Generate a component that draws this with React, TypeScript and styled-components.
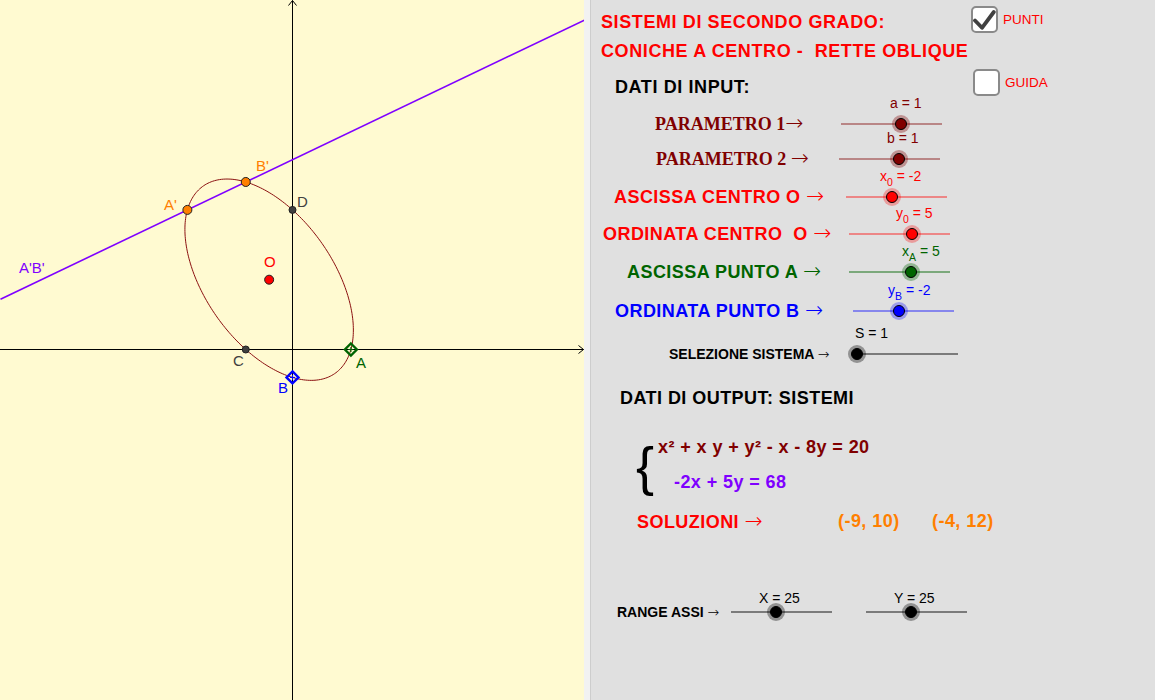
import React from "react";
import styled, { createGlobalStyle } from "styled-components";

const RED = "#ff0000";
const DARKRED = "#800000";
const GREEN = "#006400";
const BLUE = "#0000ff";
const PURPLE = "#7f00ff";
const ORANGE = "#ff7f00";
const PANEL_X = 591;

const GlobalStyle = createGlobalStyle`
  html, body {
    margin: 0;
    padding: 0;
    overflow: hidden;
  }
  body {
    font-family: "Liberation Sans", Arial, sans-serif;
  }
`;

const Page = styled.div`
  display: flex;
  width: 1155px;
  height: 700px;
  background: #e0e0e0;
`;

const Graphics = styled.div`
  width: 584px;
  height: 700px;
  flex-shrink: 0;
  background: #fffad1;
  svg {
    display: block;
  }
`;

const Divider = styled.div`
  width: 6px;
  flex-shrink: 0;
  background: #f2f2f2;
  border-right: 1px solid #cdcdcd;
`;

const Panel = styled.div`
  flex: 1;
  display: flex;
  flex-direction: column;
`;

const HeaderRow = styled.div<{ $h: number; $mt?: number }>`
  display: flex;
  align-items: center;
  height: ${(p) => p.$h}px;
  margin-top: ${(p) => p.$mt ?? 0}px;
  padding-left: 10px;
`;

const TitleCell = styled.div<{ $indent?: number }>`
  width: ${(p) => 370 - (p.$indent ?? 0)}px;
  padding-left: ${(p) => p.$indent ?? 0}px;
  flex-shrink: 0;
`;

const Title = styled.span<{ $color: string }>`
  font-weight: bold;
  font-size: 18px;
  letter-spacing: 0.6px;
  line-height: 22px;
  color: ${(p) => p.$color};
  white-space: pre;
`;

const CheckItem = styled.label<{ $top: number; $shift?: number }>`
  display: flex;
  align-items: center;
  align-self: flex-start;
  margin-top: ${(p) => p.$top}px;
  margin-left: ${(p) => p.$shift ?? 0}px;
  gap: 5px;
`;

const Box = styled.span`
  width: 23px;
  height: 23px;
  border: 2px solid #8a8a8a;
  border-radius: 5px;
  background: #ffffff;
  display: flex;
  align-items: center;
  justify-content: center;
`;

const CheckText = styled.span`
  font-size: 13.5px;
  color: ${RED};
`;

const Checkbox = ({ checked, label, top, shift }: { checked: boolean; label: string; top: number; shift?: number }) => (
  <CheckItem $top={top} $shift={shift}>
    <Box>
      {checked && (
        <svg width="23" height="23" viewBox="0 0 23 23">
          <polyline
            points="2,12.5 9,19.8 20.8,4"
            fill="none"
            stroke="#404040"
            strokeWidth="3.8"
            strokeLinecap="round"
            strokeLinejoin="round"
          />
        </svg>
      )}
    </Box>
    <CheckText>{label}</CheckText>
  </CheckItem>
);

const SliderRow = styled.div<{ $labelX: number; $trackX: number; $mt: number }>`
  display: grid;
  grid-template-columns: ${(p) => p.$trackX - p.$labelX}px auto;
  align-items: center;
  height: 20px;
  margin-top: ${(p) => p.$mt}px;
  padding-left: ${(p) => p.$labelX - PANEL_X}px;
`;

const RowLabel = styled.span<{ $color: string; $serif?: boolean; $size?: number }>`
  font-family: ${(p) =>
    p.$serif ? '"Liberation Serif", "Times New Roman", serif' : '"Liberation Sans", Arial, sans-serif'};
  font-weight: bold;
  font-size: ${(p) => p.$size ?? 18}px;
  letter-spacing: ${(p) => (p.$serif || (p.$size ?? 18) < 16 ? 0 : 0.45)}px;
  line-height: 20px;
  color: ${(p) => p.$color};
  white-space: pre;
`;

const Arrow = styled.span<{ $scale?: number }>`
  font-family: "DejaVu Sans", sans-serif;
  font-weight: 200;
  font-size: ${(p) => p.$scale ?? 1.2}em;
  letter-spacing: 0;
  line-height: 0;
`;

const Track = styled.div<{ $color: string; $w?: number }>`
  position: relative;
  width: ${(p) => p.$w ?? 101}px;
  height: 2px;
  background: ${(p) => p.$color};
`;

const Thumb = styled.span<{ $fill: string; $halo: string }>`
  position: absolute;
  top: 1px;
  width: 12px;
  height: 12px;
  margin: -6px 0 0 -6px;
  box-sizing: border-box;
  border-radius: 50%;
  background: ${(p) => p.$fill};
  border: 1px solid #000;
  box-shadow: 0 0 0 3px ${(p) => p.$halo};
`;

const ValueLabel = styled.span<{ $color: string; $rise: number; $dx: number }>`
  position: absolute;
  left: ${(p) => p.$dx}px;
  top: ${(p) => 1 - p.$rise - 8}px;
  font-size: 14px;
  line-height: 16px;
  color: ${(p) => p.$color};
  white-space: pre;
  sub {
    font-size: 10.5px;
    vertical-align: baseline;
    position: relative;
    top: 5px;
  }
`;

type SliderProps = {
  color: string;
  track: string;
  halo: string;
  frac: number;
  dx: number;
  rise: number;
  children: React.ReactNode;
};

const Slider = ({ color, track, halo, frac, dx, rise, children }: SliderProps) => (
  <Track $color={track}>
    <ValueLabel $color={color} $rise={rise} $dx={dx}>
      {children}
    </ValueLabel>
    <Thumb $fill={color} $halo={halo} style={{ left: `${frac * 100}%` }} />
  </Track>
);

const SectionHeading = styled.div<{ $mt: number; $x: number }>`
  height: 20px;
  line-height: 20px;
  margin-top: ${(p) => p.$mt}px;
  padding-left: ${(p) => p.$x - PANEL_X}px;
  font-weight: bold;
  font-size: 18px;
  letter-spacing: 0.45px;
  color: #000;
`;

const SystemBlock = styled.div`
  display: flex;
  margin-top: 27px;
  padding-left: 45px;
`;

const Brace = styled.span`
  font-size: 54px;
  line-height: 54px;
  height: 54px;
  margin-top: 4px;
  color: #000;
`;

const Equations = styled.div`
  display: flex;
  flex-direction: column;
  gap: 11px;
`;

const Equation = styled.div<{ $color: string; $indent: number }>`
  height: 24px;
  line-height: 24px;
  margin-left: ${(p) => p.$indent}px;
  font-weight: bold;
  font-size: 18px;
  letter-spacing: 0.4px;
  color: ${(p) => p.$color};
  white-space: pre;
`;

const SolutionsRow = styled.div`
  display: grid;
  grid-template-columns: 201px 94px auto;
  align-items: center;
  height: 20px;
  margin-top: 17px;
  padding-left: 46px;
`;

const Solution = styled.span`
  font-weight: bold;
  font-size: 18px;
  letter-spacing: 0.45px;
  color: ${ORANGE};
`;

const RangeRow = styled.div`
  display: flex;
  align-items: center;
  height: 20px;
  margin-top: 71px;
  padding-left: 26px;
`;

const RangeLabel = styled(RowLabel)`
  width: 114px;
`;

const RangeGap = styled.span`
  width: 34px;
`;

/* ---------- geometry view ---------- */

const OX = 292.5;
const OY = 349.5;
const KX = 584 / 50;
const KY = 698 / 50;
const sx = (x: number) => OX + x * KX;
const sy = (y: number) => OY - y * KY;

const ellipsePath = (() => {
  const a = Math.sqrt(26);
  const b = Math.sqrt(78);
  const pts: string[] = [];
  for (let i = 0; i < 240; i++) {
    const t = (i / 240) * 2 * Math.PI;
    const u = (a * Math.cos(t) + b * Math.sin(t)) / Math.SQRT2;
    const v = (a * Math.cos(t) - b * Math.sin(t)) / Math.SQRT2;
    pts.push(`${sx(u - 2).toFixed(2)},${sy(v + 5).toFixed(2)}`);
  }
  return "M" + pts.join("L") + "Z";
})();

const Dot = ({ x, y, fill, r = 4.5 }: { x: number; y: number; fill: string; r?: number }) => (
  <circle cx={sx(x)} cy={sy(y)} r={r} fill={fill} stroke="#202020" strokeWidth={1} />
);

const Diamond = ({ x, y, color }: { x: number; y: number; color: string }) => {
  const cx = sx(x);
  const cy = sy(y);
  const d = 6;
  return (
    <g stroke={color} fill="none">
      <polygon points={`${cx},${cy - d} ${cx + d},${cy} ${cx},${cy + d} ${cx - d},${cy}`} strokeWidth={2.4} />
      <line x1={cx - 2.5} y1={cy} x2={cx + 2.5} y2={cy} strokeWidth={1.1} />
      <line x1={cx} y1={cy - 2.5} x2={cx} y2={cy + 2.5} strokeWidth={1.1} />
    </g>
  );
};

const Tag = ({ x, y, color, children }: { x: number; y: number; color: string; children: React.ReactNode }) => (
  <text x={x} y={y} fill={color} fontSize={15} fontFamily='"Liberation Sans", Arial, sans-serif'>
    {children}
  </text>
);

function GeometryView() {
  return (
    <Graphics>
      <svg width={584} height={700} viewBox="0 0 584 700">
        <line x1={0} y1={OY} x2={583.5} y2={OY} stroke="#000" strokeWidth={1} />
        <polyline points={`578.5,${OY - 4} 583.5,${OY} 578.5,${OY + 4}`} fill="none" stroke="#000" strokeWidth={1} />
        <line x1={OX} y1={0.5} x2={OX} y2={700} stroke="#000" strokeWidth={1} />
        <polyline points={`${OX - 4},5.5 ${OX},0.5 ${OX + 4},5.5`} fill="none" stroke="#000" strokeWidth={1} />

        <path d={ellipsePath} fill="none" stroke="#8b1010" strokeWidth={1} />
        <line x1={sx(-25)} y1={sy(18 / 5)} x2={sx(25)} y2={sy(118 / 5)} stroke={PURPLE} strokeWidth={1.6} />

        <Dot x={-9} y={10} fill={ORANGE} />
        <Dot x={-4} y={12} fill={ORANGE} />
        <Dot x={0} y={10} fill="#404040" r={3.5} />
        <Dot x={-4} y={0} fill="#404040" r={3.5} />
        <Dot x={-2} y={5} fill={RED} />
        <Diamond x={5} y={0} color={GREEN} />
        <Diamond x={0} y={-2} color={BLUE} />

        <Tag x={256} y={171} color={ORANGE}>B'</Tag>
        <Tag x={164} y={210} color={ORANGE}>A'</Tag>
        <Tag x={297} y={207} color="#404040">D</Tag>
        <Tag x={264} y={267} color={RED}>O</Tag>
        <Tag x={233} y={366} color="#404040">C</Tag>
        <Tag x={356} y={368} color={GREEN}>A</Tag>
        <Tag x={278} y={393} color={BLUE}>B</Tag>
        <Tag x={19} y={273} color={PURPLE}>A'B'</Tag>
      </svg>
    </Graphics>
  );
}

/* ---------- algebra / controls panel ---------- */

type Row = {
  label: string;
  serif?: boolean;
  size?: number;
  color: string;
  track: string;
  halo: string;
  labelX: number;
  trackX: number;
  mt: number;
  frac: number;
  dx: number;
  value: React.ReactNode;
};

const rows: Row[] = [
  {
    label: "PARAMETRO 1",
    serif: true,
    color: DARKRED,
    track: "rgba(128,0,0,0.4)",
    halo: "rgba(128,0,0,0.35)",
    labelX: 655,
    trackX: 841,
    mt: 16,
    frac: 60 / 101,
    dx: 49,
    value: "a = 1",
  },
  {
    label: "PARAMETRO 2 ",
    serif: true,
    color: DARKRED,
    track: "rgba(128,0,0,0.4)",
    halo: "rgba(128,0,0,0.35)",
    labelX: 656,
    trackX: 839,
    mt: 15,
    frac: 60 / 101,
    dx: 48,
    value: "b = 1",
  },
  {
    label: "ASCISSA CENTRO O ",
    color: RED,
    track: "rgba(255,0,0,0.4)",
    halo: "rgba(255,0,0,0.3)",
    labelX: 614,
    trackX: 846,
    mt: 18,
    frac: 46 / 101,
    dx: 34,
    value: (
      <>
        x<sub>0</sub> = -2
      </>
    ),
  },
  {
    label: "ORDINATA CENTRO  O ",
    color: RED,
    track: "rgba(255,0,0,0.4)",
    halo: "rgba(255,0,0,0.3)",
    labelX: 603,
    trackX: 849,
    mt: 17,
    frac: 63 / 101,
    dx: 47,
    value: (
      <>
        y<sub>0</sub> = 5
      </>
    ),
  },
  {
    label: "ASCISSA PUNTO A ",
    color: GREEN,
    track: "rgba(0,100,0,0.45)",
    halo: "rgba(0,100,0,0.35)",
    labelX: 627,
    trackX: 849,
    mt: 18,
    frac: 62 / 101,
    dx: 53,
    value: (
      <>
        x<sub>A</sub> = 5
      </>
    ),
  },
  {
    label: "ORDINATA PUNTO B ",
    color: BLUE,
    track: "rgba(0,0,255,0.4)",
    halo: "rgba(0,0,255,0.3)",
    labelX: 615,
    trackX: 853,
    mt: 19,
    frac: 46 / 101,
    dx: 35,
    value: (
      <>
        y<sub>B</sub> = -2
      </>
    ),
  },
  {
    label: "SELEZIONE SISTEMA ",
    size: 14,
    color: "#000000",
    track: "rgba(0,0,0,0.45)",
    halo: "rgba(0,0,0,0.35)",
    labelX: 669,
    trackX: 857,
    mt: 23,
    frac: 0,
    dx: -2,
    value: "S = 1",
  },
];

export default function App() {
  return (
    <>
      <GlobalStyle />
      <Page>
        <GeometryView />
        <Divider />
        <Panel>
          <HeaderRow $h={44}>
            <TitleCell>
              <Title $color={RED}>SISTEMI DI SECONDO GRADO:</Title>
            </TitleCell>
            <Checkbox checked label="PUNTI" top={6} />
          </HeaderRow>
          <HeaderRow $h={14}>
            <TitleCell>
              <Title $color={RED}>{"CONICHE A CENTRO -  RETTE OBLIQUE"}</Title>
            </TitleCell>
          </HeaderRow>
          <HeaderRow $h={22} $mt={18}>
            <TitleCell $indent={14}>
              <Title $color="#000">DATI DI INPUT:</Title>
            </TitleCell>
            <Checkbox checked={false} label="GUIDA" top={-7} shift={2} />
          </HeaderRow>

          {rows.map((r) => (
            <SliderRow key={r.label} $labelX={r.labelX} $trackX={r.trackX} $mt={r.mt}>
              <RowLabel $color={r.color} $serif={r.serif} $size={r.size}>
                {r.label}
                <Arrow $scale={r.size ? 1 : 1.2}>→</Arrow>
              </RowLabel>
              <Slider color={r.color} track={r.track} halo={r.halo} frac={r.frac} dx={r.dx} rise={21}>
                {r.value}
              </Slider>
            </SliderRow>
          ))}

          <SectionHeading $mt={24} $x={620}>
            DATI DI OUTPUT: SISTEMI
          </SectionHeading>

          <SystemBlock>
            <Brace>{"{"}</Brace>
            <Equations>
              <Equation $color={DARKRED} $indent={4}>
                x² + x y + y² - x - 8y = 20
              </Equation>
              <Equation $color={PURPLE} $indent={20}>
                -2x + 5y = 68
              </Equation>
            </Equations>
          </SystemBlock>

          <SolutionsRow>
            <RowLabel $color={RED}>
              SOLUZIONI <Arrow>→</Arrow>
            </RowLabel>
            <Solution>(-9, 10)</Solution>
            <Solution>(-4, 12)</Solution>
          </SolutionsRow>

          <RangeRow>
            <RangeLabel $color="#000" $size={14}>
              RANGE ASSI <Arrow $scale={1}>→</Arrow>
            </RangeLabel>
            <Slider color="#000" track="rgba(0,0,0,0.45)" halo="rgba(0,0,0,0.35)" frac={45 / 101} dx={28} rise={14}>
              X = 25
            </Slider>
            <RangeGap />
            <Slider color="#000" track="rgba(0,0,0,0.45)" halo="rgba(0,0,0,0.35)" frac={45 / 101} dx={28} rise={14}>
              Y = 25
            </Slider>
          </RangeRow>
        </Panel>
      </Page>
    </>
  );
}
